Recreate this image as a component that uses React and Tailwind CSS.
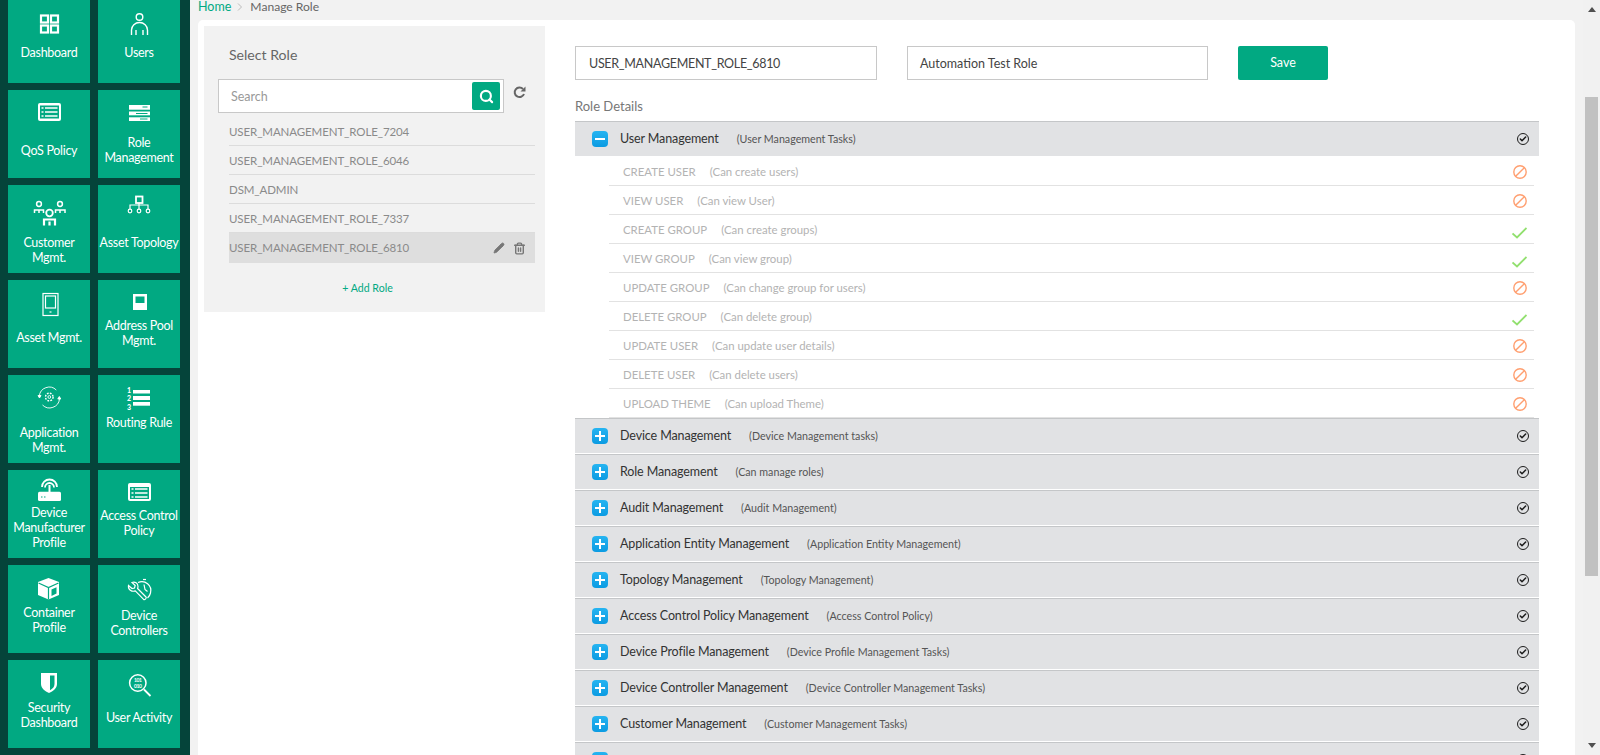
import { Check, Pencil, Search, Trash2 } from 'lucide-react'

const G = '#01a982'

// sidebar icons, drawn on a 36x28 box
const icons = {
  dashboard: (
    <g fill="none" stroke="#fff" strokeWidth="2.2">
      <rect x="10" y="5.500" width="7" height="7" />
      <rect x="20" y="5.500" width="7" height="7" />
      <rect x="10" y="15.500" width="7" height="7" />
      <rect x="20" y="15.500" width="7" height="7" />
    </g>
  ),
  users: (
    <g fill="none" stroke="#fff" strokeWidth="1.4">
      <circle cx="18.500" cy="7" r="3.300" />
      <path d="M10.500 25v-5a8 7.500 0 0 1 16 0v5M15 25v-5M22 25v-5" />
    </g>
  ),
  qos: (
    <g>
      <rect x="7" y="5" width="23" height="18" rx="2" fill="#fff" />
      <rect x="9" y="7.500" width="19" height="13" fill={G} />
      <path d="M10.500 10h2M10.500 14h2M10.500 18h2M14 10h12.500M14 14h12.500M14 18h12.500" stroke="#fff" strokeWidth="1.600" />
    </g>
  ),
  role: (
    <g>
      <rect x="8" y="6" width="21" height="4.700" fill="#fff" />
      <rect x="8" y="12.500" width="21" height="3.800" fill="#fff" />
      <rect x="8" y="18.300" width="21" height="3.700" fill="#fff" />
      <path d="M21.500 8h5M15 14.500h11.500M19 20h7.500" stroke={G} strokeWidth="1" />
    </g>
  ),
  customer: (
    <g fill="none" stroke="#fff" strokeWidth="1.500">
      <circle cx="8" cy="5" r="2.400" />
      <path d="M3.500 14v-3h9v3M8 14v-3" />
      <circle cx="29" cy="5" r="2.400" />
      <path d="M24.500 14v-3h9.500v3M29 14v-3" />
      <circle cx="18.500" cy="14" r="3.300" strokeWidth="1.800" />
      <path d="M13 26.500v-6h11v6M18.500 26.500v-4" strokeWidth="2.200" />
    </g>
  ),
  topology: (
    <g fill="none" stroke="#fff" strokeWidth="1.200">
      <rect x="15" y="5.500" width="6.500" height="6.500" strokeWidth="1.800" />
      <path d="M18 12v6M9 18v-4h18v4" />
      <circle cx="9" cy="20" r="1.800" />
      <circle cx="18" cy="20" r="1.800" />
      <circle cx="27" cy="20" r="1.800" />
    </g>
  ),
  asset: (
    <g fill="none" stroke="#fff" strokeWidth="1.200">
      <rect x="12" y="3.500" width="15" height="22" />
      <rect x="14.500" y="6" width="10" height="12" />
      <path d="M18.500 22h2" />
    </g>
  ),
  address: (
    <g>
      <rect x="12" y="6" width="14" height="16" fill="#fff" />
      <rect x="14.500" y="8.500" width="9" height="6.500" fill={G} />
    </g>
  ),
  application: (
    <g fill="none" stroke="#fff" strokeWidth="0.900">
      <path d="M8.300 13a10 10 0 0 1 17-6M28.500 16a10 10 0 0 1-17 6" />
      <path d="M7 12.500h3l-1.500 2.500zM29.800 16h-3l1.500-2.500z" fill="#fff" />
      <circle cx="18.300" cy="14" r="1.400" />
      <circle cx="18.300" cy="14" r="3.800" strokeDasharray="1.800 1.200" strokeWidth="1.400" />
    </g>
  ),
  routing: (
    <g>
      <text x="6" y="8.500" fill="#fff" fontSize="7" fontWeight="900" fontFamily="Lato">1</text>
      <text x="6" y="17" fill="#fff" fontSize="7" fontWeight="900" fontFamily="Lato">2</text>
      <text x="6" y="25.500" fill="#fff" fontSize="7" fontWeight="900" fontFamily="Lato">3</text>
      <rect x="12" y="6" width="17" height="3.500" fill="#fff" />
      <rect x="12" y="12" width="17" height="4" fill="#fff" />
      <rect x="12" y="18" width="17" height="3.700" fill="#fff" />
    </g>
  ),
  router: (
    <g>
      <path d="M11 11a7.500 7.500 0 0 1 15 0M14 11.500a4.500 4.500 0 0 1 9 0" fill="none" stroke="#fff" strokeWidth="1.800" />
      <rect x="17.500" y="9" width="2" height="8" fill="#fff" />
      <rect x="7" y="15.700" width="23" height="9.300" rx="1.500" fill="#fff" />
      <path d="M10 21h1.500M13 21h1.500" stroke={G} strokeWidth="1.200" />
    </g>
  ),
  acp: (
    <g>
      <rect x="7" y="5" width="23" height="18" rx="2" fill="#fff" />
      <rect x="9" y="9" width="19" height="12" fill={G} />
      <path d="M10.500 11h2M10.500 15h2M10.500 19h2M14 11h12.500M14 15h12.500M14 19h12.500" stroke="#fff" strokeWidth="1.600" />
    </g>
  ),
  container: (
    <g>
      <path d="M17.500 3l10.500 4v13l-10.500 4.500L7 20V7z" fill="#fff" />
      <path d="M7.500 8l10 4.500 10-4.500M17.500 12.500v12" fill="none" stroke={G} strokeWidth="1.200" />
      <path d="M20.500 14.500l5-2.300v6.300l-5 2.500z" fill={G} />
    </g>
  ),
  controllers: (
    <g fill="none" stroke="#fff" strokeWidth="1.200">
      <path d="M7.500 9.500l3.500 3 2.500-.5.700-2.500-3.200-3c3-1.200 6 .8 6 4 0 .8-.2 1.400-.4 2l8.400 8.500c1 1.100-1.200 3.300-2.400 2.400l-8.300-8.500c-3.500 1.200-7.500-1.400-6.800-5.400z" />
      <path d="M17 6.500a9 9 0 0 1 12.500 10.500 9 9 0 0 1-3 5M23 8.500l1 5 2.500 2" />
      <path d="M22 3.500h3" />
    </g>
  ),
  security: (
    <g>
      <path d="M10 4h16v11c0 4.500-4 7-8 9-4-2-8-4.500-8-9z" fill="#fff" />
      <path d="M19 6.500h4.500v8.500c0 3-2 4.800-4.500 6.300z" fill={G} />
    </g>
  ),
  activity: (
    <g>
      <circle cx="16.800" cy="13" r="8.200" fill="none" stroke="#fff" strokeWidth="1.500" />
      <path d="M23 19.500l6.500 6.500" stroke="#fff" strokeWidth="1.800" />
      <text x="16.800" y="12" textAnchor="middle" fill="#fff" fontSize="5" fontWeight="700" fontFamily="Lato">101</text>
      <text x="16.800" y="18" textAnchor="middle" fill="#fff" fontSize="5" fontWeight="700" fontFamily="Lato">010</text>
    </g>
  ),
}

const tiles = [
  { icon: 'dashboard', lines: ['Dashboard'], pad: 'pt-[15px]', gap: 'mt-[7px]' },
  { icon: 'users', lines: ['Users'], pad: 'pt-[15px]', gap: 'mt-[7px]' },
  { icon: 'qos', lines: ['QoS Policy'], pad: 'pt-[8px]', gap: 'mt-[17px]' },
  { icon: 'role', lines: ['Role', 'Management'], pad: 'pt-[9px]', gap: 'mt-[8px]' },
  { icon: 'customer', lines: ['Customer', 'Mgmt.'], pad: 'pt-[14px]', gap: 'mt-[8px]' },
  { icon: 'topology', lines: ['Asset Topology'], pad: 'pt-[6px]', gap: 'mt-[16px]' },
  { icon: 'asset', lines: ['Asset Mgmt.'], pad: 'pt-[10px]', gap: 'mt-[12px]' },
  { icon: 'address', lines: ['Address Pool', 'Mgmt.'], pad: 'pt-[8px]', gap: 'mt-[2px]' },
  { icon: 'application', lines: ['Application', 'Mgmt.'], pad: 'pt-[8px]', gap: 'mt-[14px]' },
  { icon: 'routing', lines: ['Routing Rule'], pad: 'pt-[9px]', gap: 'mt-[3px]' },
  { icon: 'router', lines: ['Device', 'Manufacturer', 'Profile'], pad: 'pt-[6px]', gap: 'mt-px' },
  { icon: 'acp', lines: ['Access Control', 'Policy'], pad: 'pt-[8px]', gap: 'mt-[2px]' },
  { icon: 'container', lines: ['Container', 'Profile'], pad: 'pt-[10px]', gap: 'mt-[2px]' },
  { icon: 'controllers', lines: ['Device', 'Controllers'], pad: 'pt-[11px]', gap: 'mt-[4px]' },
  { icon: 'security', lines: ['Security', 'Dashboard'], pad: 'pt-[9px]', gap: 'mt-[3px]' },
  { icon: 'activity', lines: ['User Activity'], pad: 'pt-[10px]', gap: 'mt-[12px]' },
]

const roles = [
  'USER_MANAGEMENT_ROLE_7204',
  'USER_MANAGEMENT_ROLE_6046',
  'DSM_ADMIN',
  'USER_MANAGEMENT_ROLE_7337',
]

const userTasks = [
  ['CREATE USER', 'Can create users', false],
  ['VIEW USER', 'Can view User', false],
  ['CREATE GROUP', 'Can create groups', true],
  ['VIEW GROUP', 'Can view group', true],
  ['UPDATE GROUP', 'Can change group for users', false],
  ['DELETE GROUP', 'Can delete group', true],
  ['UPDATE USER', 'Can update user details', false],
  ['DELETE USER', 'Can delete users', false],
  ['UPLOAD THEME', 'Can upload Theme', false],
]

const groups = [
  ['Device Management', 'Device Management tasks'],
  ['Role Management', 'Can manage roles'],
  ['Audit Management', 'Audit Management'],
  ['Application Entity Management', 'Application Entity Management'],
  ['Topology Management', 'Topology Management'],
  ['Access Control Policy Management', 'Access Control Policy'],
  ['Device Profile Management', 'Device Profile Management Tasks'],
  ['Device Controller Management', 'Device Controller Management Tasks'],
  ['Customer Management', 'Customer Management Tasks'],
  ['', ''],
]

function Tile({ tile }) {
  return (
    <div className={`flex h-[88px] flex-col items-center bg-[#01a982] text-center text-[12.5px] leading-[15px] tracking-[-0.3px] text-white ${tile.pad}`}>
      <svg width="36" height="28" viewBox="0 0 36 28" className="shrink-0">
        {icons[tile.icon]}
      </svg>
      <div className={tile.gap}>
        {tile.lines.map(line => (
          <div key={line} className="whitespace-nowrap">{line}</div>
        ))}
      </div>
    </div>
  )
}

function GroupHeader({ name, desc, open }) {
  return (
    <div className="mb-px flex h-[35px] items-center border-t border-[#c4c6c8] bg-[#e1e2e4] pl-[17px] pr-[10px]">
      <span className="flex h-4 w-4 shrink-0 items-center justify-center rounded-[4px] bg-gradient-to-b from-[#25b4f1] to-[#0a9be2]">
        <svg width="10" height="10" viewBox="0 0 10 10">
          <path d={open ? 'M0 5h10' : 'M0 5h10M5 0v10'} stroke="#fff" strokeWidth="2" />
        </svg>
      </span>
      <span className="ml-[12px] text-[12.5px] tracking-[-0.12px] text-[#333]">{name}</span>
      {desc && <span className="ml-[18px] text-[10.7px] text-[#555]">({desc})</span>}
      <span className="ml-auto flex h-[12px] w-[12px] items-center justify-center rounded-full border-[1.5px] border-[#1c1c1c]">
        <Check size={8} strokeWidth={4.5} className="text-[#1c1c1c]" />
      </span>
    </div>
  )
}

function TaskRow({ name, desc, allowed }) {
  return (
    <div className="ml-[34px] mr-[5px] flex h-[29px] items-center border-b border-[#e2e2e2] pl-[14px] pt-[2px] text-[11.4px] text-[#b3b3b3]">
      <span>{name}</span>
      <span className="ml-[14px]">({desc})</span>
      <span className="ml-auto mr-[7px] flex w-[15px] justify-center">
        {allowed ? (
          <svg width="15" height="12" viewBox="0 0 15 12" className="mt-[5px]">
            <path d="M0.500 6.500l4.500 4L14.500 1" fill="none" stroke="#92e06f" strokeWidth="1.800" />
          </svg>
        ) : (
          <svg width="14" height="14" viewBox="0 0 14 14">
            <circle cx="7" cy="7" r="6.200" fill="none" stroke="#ff9f70" strokeWidth="1.400" />
            <path d="M2.700 11.300l8.600-8.600" stroke="#ff9f70" strokeWidth="1.400" />
          </svg>
        )}
      </span>
    </div>
  )
}

export default function App() {
  return (
    <div className="flex h-[755px] w-[1600px] overflow-hidden bg-[#f2f2f2] font-['Lato',sans-serif]">
      {/* Sidebar */}
      <aside className="w-[190px] shrink-0 overflow-hidden bg-[#05443a] pl-2 pr-[10px]">
        <div className="-mt-[5px] grid grid-cols-2 gap-x-2 gap-y-[7px]">
          {tiles.map(tile => <Tile key={tile.icon} tile={tile} />)}
        </div>
      </aside>

      {/* Main */}
      <main className="flex min-w-0 flex-1 flex-col px-2">
        <div className="flex h-[20px] items-start text-[12.5px] leading-[13px] text-[#666]">
          <span className="text-[#01a982]">Home</span>
          <svg width="6" height="8" viewBox="0 0 6 8" className="ml-[6px] mr-[7px] mt-[3px]">
            <path d="M1 0.500L4.500 4 1 7.500" fill="none" stroke="#bbb" />
          </svg>
          <span className="text-[12.1px]">Manage Role</span>
        </div>
        <div className="flex min-h-0 flex-1 overflow-hidden rounded-t-[5px] bg-white p-[6px]">
          {/* Select role */}
          <section className="h-[286px] w-[341px] shrink-0 bg-[#f2f2f2] pl-[14px] pr-[10px] pt-[20px]">
            <div className="pl-[11px] text-[14.1px] leading-[18px] text-[#666]">Select Role</div>
            <div className="mt-[15px] flex items-start">
              <div className="flex h-[34px] w-[286px] items-center border border-[#c8c8c8] bg-white pl-[12px] pr-[3px]">
                <span className="flex-1 pt-[2px] text-[12.5px] text-[#999]">Search</span>
                <span className="flex h-[28px] w-[28px] items-center justify-center rounded-[2px] bg-[#01a982]">
                  <Search size={15} strokeWidth={3.4} className="text-white" />
                </span>
              </div>
              <svg width="14" height="14" viewBox="0 0 14 14" className="ml-[9px] mt-[6px]">
                <path d="M11 9a4.800 4.800 0 1 1-1-5" fill="none" stroke="#666" strokeWidth="2" />
                <path d="M12.500 1.500v5h-5z" fill="#666" />
              </svg>
            </div>
            <ul className="ml-[11px] mt-[4px] text-[11.5px] tracking-[-0.1px] text-[#8a8a8a]">
              {roles.map(role => (
                <li key={role} className="flex h-[29px] items-center border-b border-[#dcdcdc] pt-[2px] last:border-b-0">{role}</li>
              ))}
              <li className="flex h-[30px] items-center bg-[#dedede]">
                USER_MANAGEMENT_ROLE_6810
                <Pencil size={12} fill="#777" strokeWidth={1.5} className="ml-auto text-[#777]" />
                <Trash2 size={13} strokeWidth={2.6} className="ml-[8px] mr-[9px] text-[#777]" />
              </li>
            </ul>
            <div className="mt-[18px] pr-[18px] text-center text-[10.6px] text-[#01a982]">+ Add Role</div>
          </section>

          {/* Role details */}
          <section className="ml-[30px] w-[964px] shrink-0 pt-[20px]">
            <div className="flex">
              <div className="flex h-[34px] w-[302px] items-center border border-[#c8c8c8] pl-[13px] pt-[2px] text-[12.5px] tracking-[-0.3px] text-[#444]">USER_MANAGEMENT_ROLE_6810</div>
              <div className="ml-[30px] flex h-[34px] w-[301px] items-center border border-[#c8c8c8] pl-[12px] pt-[2px] text-[12.5px] text-[#444]">Automation Test Role</div>
              <button className="ml-[30px] h-[34px] w-[90px] rounded-[2px] bg-[#01a982] pt-px text-[12.5px] text-white">Save</button>
            </div>
            <div className="mt-[17px] h-[24px] text-[13px] leading-[18px] text-[#777]">Role Details</div>
            <GroupHeader name="User Management" desc="User Management Tasks" open />
            {userTasks.map(([name, desc, allowed]) => (
              <TaskRow key={name} name={name} desc={desc} allowed={allowed} />
            ))}
            {groups.map(([name, desc], i) => (
              <GroupHeader key={i} name={name} desc={desc} />
            ))}
          </section>
        </div>
      </main>

      {/* Scrollbar */}
      <div className="flex w-[17px] shrink-0 flex-col items-center bg-[#f1f1f1]">
        <svg width="8" height="5" viewBox="0 0 8 5" className="mt-[7px]"><path d="M4 0l4 5H0z" fill="#505050" /></svg>
        <div className="mt-[85px] h-[479px] w-[13px] bg-[#c1c1c1]" />
        <svg width="8" height="5" viewBox="0 0 8 5" className="mt-[167px]"><path d="M0 0h8L4 5z" fill="#505050" /></svg>
      </div>
    </div>
  )
}
